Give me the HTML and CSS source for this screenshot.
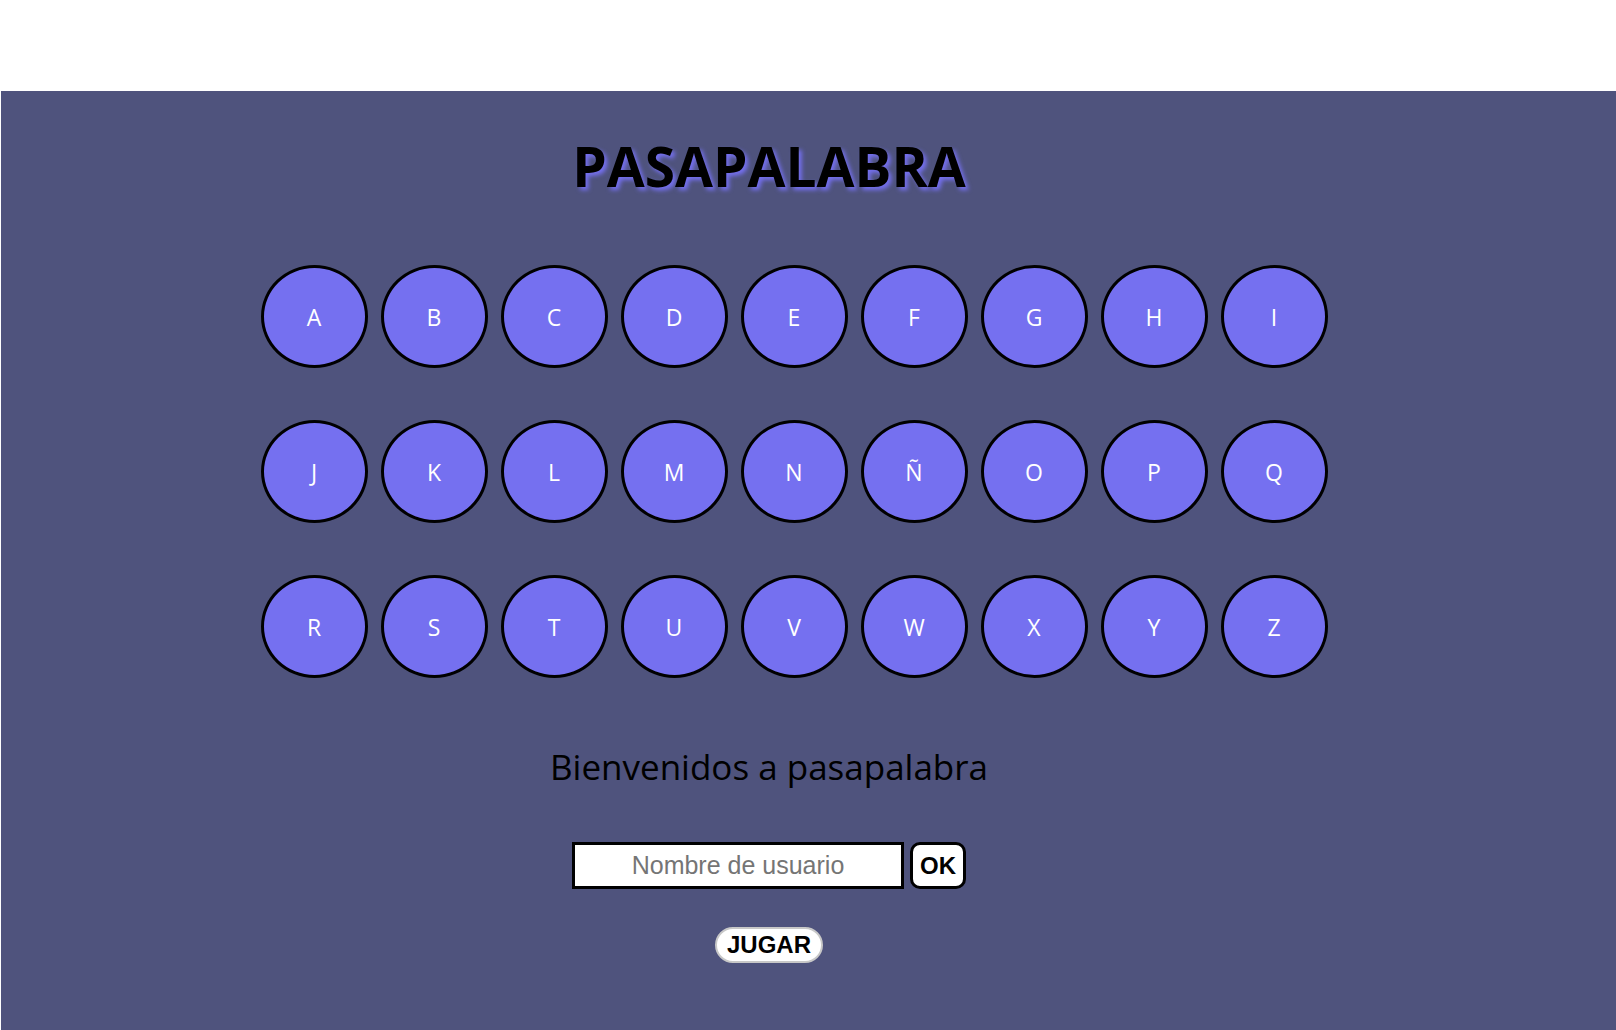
FILE: index.html
```html
<!DOCTYPE html>
<html lang="es">
<head>
<meta charset="utf-8">
<title>Pasapalabra</title>
<link rel="stylesheet" href="styles.css">
</head>
<body>
<div class="top-space"></div>
<main class="board">
  <h1 class="title">PASAPALABRA</h1>
  <div class="rosco">
    <div class="letter">A</div><div class="letter">B</div><div class="letter">C</div><div class="letter">D</div><div class="letter">E</div><div class="letter">F</div><div class="letter">G</div><div class="letter">H</div><div class="letter">I</div>
    <div class="letter">J</div><div class="letter">K</div><div class="letter">L</div><div class="letter">M</div><div class="letter">N</div><div class="letter">Ñ</div><div class="letter">O</div><div class="letter">P</div><div class="letter">Q</div>
    <div class="letter">R</div><div class="letter">S</div><div class="letter">T</div><div class="letter">U</div><div class="letter">V</div><div class="letter">W</div><div class="letter">X</div><div class="letter">Y</div><div class="letter">Z</div>
  </div>
  <p class="welcome">Bienvenidos a pasapalabra</p>
  <div class="login">
    <input class="username" type="text" placeholder="Nombre de usuario">
    <button class="ok-btn">OK</button>
  </div>
  <button class="play-btn">JUGAR</button>
</main>
</body>
</html>
```
FILE: styles.css
```css
html, body {
  margin: 0;
  padding: 0;
  background: #ffffff;
}

.top-space {
  height: 91px;
}

.board {
  margin-left: 1px;
  height: 939px;
  background: #4f537d;
  display: flex;
  flex-direction: column;
  align-items: center;
  width: 1536px;
  box-shadow: 1000px 0 0 #4f537d;
  font-family: "Open Sans", "Noto Sans", sans-serif;
}

.title {
  margin: 40px 0 0 0;
  font-size: 55px;
  font-weight: 700;
  line-height: 70px;
  color: #000;
  text-shadow: 3px 3px 4px #7570f0;
}

.rosco {
  margin-top: 64px;
  margin-left: 50px;
  display: grid;
  grid-template-columns: repeat(9, 107px);
  column-gap: 13px;
  row-gap: 52px;
}

.letter {
  box-sizing: border-box;
  width: 107px;
  height: 103px;
  border: 3px solid #000;
  border-radius: 50%;
  background: #7570f0;
  color: #fff;
  font-size: 23px;
  display: flex;
  align-items: center;
  justify-content: center;
  padding-top: 1px;
}

.welcome {
  margin: 65px 0 0 0;
  font-size: 35px;
  line-height: 48px;
  color: #000;
}

.login {
  margin-top: 51px;
  display: flex;
  gap: 6px;
}

.username {
  box-sizing: border-box;
  width: 332px;
  height: 47px;
  border: 3px solid #000;
  background: #fff;
  font-family: "Liberation Sans", Arial, sans-serif;
  font-size: 25px;
  text-align: center;
  padding: 0;
  outline: none;
}

.username::placeholder {
  color: #757575;
}

.ok-btn {
  box-sizing: border-box;
  width: 56px;
  height: 47px;
  border: 3px solid #000;
  border-radius: 10px;
  background: #fff;
  font-family: "Liberation Sans", Arial, sans-serif;
  font-size: 24px;
  font-weight: 700;
  color: #000;
  padding: 0;
}

.play-btn {
  box-sizing: border-box;
  margin-top: 38px;
  width: 108px;
  height: 36px;
  border: 2px solid #c8c8c8;
  border-radius: 18px;
  background: #fff;
  font-family: "Liberation Sans", Arial, sans-serif;
  font-size: 24px;
  font-weight: 700;
  color: #000;
  padding: 0;
}
```
